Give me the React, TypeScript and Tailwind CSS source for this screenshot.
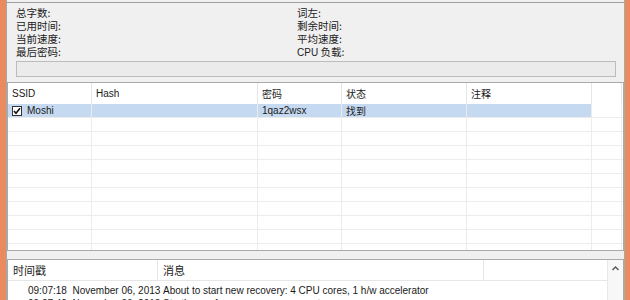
import React from "react";

const cjk = { fontFamily: '"Noto Sans CJK SC", "DejaVu Sans", sans-serif' };
const lat = { fontFamily: '"Liberation Sans", "Noto Sans CJK SC", sans-serif' };

const cols = [84, 166, 84, 125, 125, 30];

function Row({ cells, selected }: { cells: React.ReactNode[]; selected?: boolean }) {
  return (
    <div className="flex h-[14px] shrink-0 border-b border-[#ececec]">
      {cols.map((w, i) => (
        <div
          key={i}
          style={{ width: w }}
          className={`shrink-0 h-full flex items-center border-r border-[#ececec] text-[10px] text-[#1a1a1a] ${
            selected && i < 5 ? "bg-[#c5d9f1]" : ""
          }`}
        >
          {cells[i]}
        </div>
      ))}
    </div>
  );
}

export default function App() {
  const labelsL = ["总字数:", "已用时间:", "当前速度:", "最后密码:"];
  const labelsR = ["词左:", "剩余时间:", "平均速度:", "CPU 负载:"];
  const headers = ["SSID", "Hash", "密码", "状态", "注释", ""];
  return (
    <div className="w-[630px] h-[300px] bg-[#e98b5e] flex overflow-hidden">
      <div className="w-[6px] shrink-0" />
      <div className="w-[619px] shrink-0 h-full bg-[#f0f0f0] border-l border-r border-[#a8a8a8] flex flex-col pt-[2px]">
        <div className="border-t border-[#a0a0a0] flex flex-col">
          <div className="flex pt-[3px] text-[10.5px] leading-[13px] text-[#222]">
            <div className="w-[290px] pl-[9px] flex flex-col" style={cjk}>
              {labelsL.map((l) => (
                <div key={l} className="h-[13px] leading-[13px] overflow-visible">{l}</div>
              ))}
            </div>
            <div className="flex flex-col" style={cjk}>
              {labelsR.map((l) => (
                <div key={l} className="h-[13px] leading-[13px]">
                  {l.startsWith("CPU") ? (
                    <>
                      <span style={lat} className="text-[10px]">CPU</span> 负载:
                    </>
                  ) : (
                    l
                  )}
                </div>
              ))}
            </div>
          </div>
          <div className="ml-[9px] mt-[3px] w-[600px] h-[16px] border border-[#bcbcbc] bg-[#ebebeb]" />
        </div>

        <div className="mt-[5px] h-[169px] border border-[#a9a9a9] bg-white flex flex-col overflow-hidden">
          <div className="flex h-[21px] shrink-0">
            {cols.map((w, i) => (
              <div
                key={i}
                style={{ width: w, ...(i === 2 || i === 3 || i === 4 ? cjk : lat) }}
                className="shrink-0 h-full flex items-center pl-[4px] border-r border-[#e6e6e6] text-[10px] text-[#1a1a1a]"
              >
                {headers[i]}
              </div>
            ))}
          </div>
          <Row
            selected
            cells={[
              <div className="flex items-center pl-[4px] gap-[5px]" style={lat}>
                <div className="w-[10px] h-[10px] border border-[#333] bg-white flex items-center justify-center">
                  <svg width="8" height="8" viewBox="0 0 8 8">
                    <path d="M1 4 L3 6.3 L7 1.3" stroke="#111" strokeWidth="1.6" fill="none" />
                  </svg>
                </div>
                <span>Moshi</span>
              </div>,
              "",
              <span className="pl-[4px]" style={lat}>1qaz2wsx</span>,
              <span className="pl-[4px]" style={cjk}>找到</span>,
              "",
              "",
            ]}
          />
          {Array.from({ length: 10 }).map((_, i) => (
            <Row key={i} cells={["", "", "", "", "", ""]} />
          ))}
        </div>

        <div className="mt-[8px] flex-1 border-t border-l border-r border-[#a9a9a9] bg-white flex overflow-hidden">
          <div className="flex-1 flex flex-col">
            <div className="flex h-[21px] shrink-0 border-b border-[#e6e6e6] text-[11px] text-[#1a1a1a]" style={cjk}>
              <div className="w-[150px] pl-[5px] flex items-center border-r border-[#e6e6e6]">时间戳</div>
              <div className="w-[326px] pl-[5px] flex items-center border-r border-[#e6e6e6]">消息</div>
              <div className="flex-1" />
            </div>
            <div className="flex flex-col text-[10px] text-[#1a1a1a]" style={lat}>
              <div className="flex h-[13px] items-center mt-[3px]">
                <div className="w-[150px] pl-[20px] whitespace-pre">09:07:18  November 06, 2013</div>
                <div className="pl-[5px] whitespace-nowrap">About to start new recovery: 4 CPU cores, 1 h/w accelerator</div>
              </div>
              <div className="flex h-[13px] items-center">
                <div className="w-[150px] pl-[20px] whitespace-pre">09:07:40  November 06, 2013</div>
                <div className="pl-[5px] whitespace-nowrap">Starting performance measurement</div>
              </div>
            </div>
          </div>
          <div className="w-[16px] shrink-0 border-l border-[#e8e8e8] bg-[#f7f7f7] flex justify-center pt-[6px]">
            <svg width="7" height="5" viewBox="0 0 7 5">
              <path d="M0.5 4 L3.5 1 L6.5 4" stroke="#555" strokeWidth="1.4" fill="none" />
            </svg>
          </div>
        </div>
      </div>
      <div className="flex-1" />
    </div>
  );
}
